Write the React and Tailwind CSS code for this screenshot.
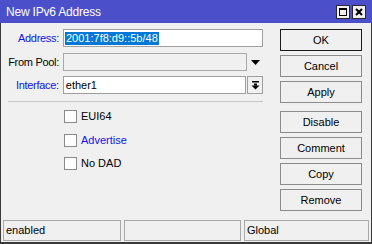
import React from 'react';

// Fenêtre "New IPv6 Address" façon Winbox
function SideButton({ label, primary = false, className = '' }) {
  return (
    <div
      className={`h-[22px] w-[82px] flex items-center justify-center bg-[#f0f0f0] border ${
        primary ? 'border-[#1c1c1c]' : 'border-[#8c8c8c]'
      } text-black ${className}`}
    >
      {label}
    </div>
  );
}

function Check({ label, blue = false, className = '' }) {
  return (
    <div className={`flex items-center h-[13px] ${className}`}>
      <div className="w-[13px] h-[13px] border border-[#8a8a8a] bg-white ml-[63px]" />
      <span className={`ml-[4px] ${blue ? 'text-[#1010f0]' : 'text-black'}`}>{label}</span>
    </div>
  );
}

export default function App() {
  return (
    <div className="w-[372px] h-[244px] flex flex-col bg-[#f0f0f0] text-[11px] leading-none font-['Liberation_Sans',Arial,sans-serif] select-none">
      {/* Barre de titre */}
      <div className="h-[23px] shrink-0 bg-[#4b4fc9] flex items-center pl-[6px] pr-[6px]">
        <span className="flex-1 text-white text-[12px] tracking-[-0.2px]">New IPv6 Address</span>
        <div className="w-[14px] h-[14px] bg-[#f0f0f0] border border-[#2a2a2a] flex items-center justify-center">
          <div className="w-[8px] h-[8px] border border-black border-t-2" />
        </div>
        <div className="ml-[2px] w-[14px] h-[14px] bg-[#f0f0f0] border border-[#2a2a2a] flex items-center justify-center">
          <svg width="8" height="8" viewBox="0 0 8 8">
            <path d="M1 1 L7 7 M7 1 L1 7" stroke="black" strokeWidth="2" />
          </svg>
        </div>
      </div>

      {/* Corps */}
      <div className="flex-1 flex border-x border-[#3a3a3a]">
        <div className="w-[262px] flex flex-col pt-[6px]">
          <div className="flex items-center h-[18px]">
            <span className="w-[58px] text-right text-[#1010f0] tracking-[-0.3px]">Address:</span>
            <div className="ml-[4px] w-[200px] h-[18px] bg-white border border-[#a0a0a0] flex items-center pl-[1px]">
              <span className="bg-[#0078d7] text-white px-[1px] leading-[13px]">2001:7f8:d9::5b/48</span>
            </div>
          </div>
          <div className="flex items-center h-[18px] mt-[6px]">
            <span className="w-[58px] text-right text-black tracking-[-0.3px]">From Pool:</span>
            <div className="ml-[4px] w-[184px] h-[18px] bg-[#f0f0f0] border border-[#a8a8a8]" />
            <div className="w-[16px] flex justify-center">
              <svg width="9" height="5" viewBox="0 0 9 5">
                <polygon points="0,0 9,0 4.5,5" fill="black" />
              </svg>
            </div>
          </div>
          <div className="flex items-center h-[18px] mt-[5px]">
            <span className="w-[58px] text-right text-[#1010f0] tracking-[-0.3px]">Interface:</span>
            <div className="ml-[4px] w-[184px] h-[18px] bg-white border border-[#a0a0a0] flex items-center pl-[2px]">
              ether1
            </div>
            <div className="ml-[1px] w-[16px] h-[18px] bg-[#f0f0f0] border border-[#a0a0a0] flex items-center justify-center">
              <svg width="9" height="9" viewBox="0 0 9 9">
                <rect x="1" y="0" width="7" height="1.5" fill="black" />
                <rect x="3" y="2.5" width="3" height="2" fill="black" />
                <polygon points="0.5,4.5 8.5,4.5 4.5,8.5" fill="black" />
              </svg>
            </div>
          </div>
          <div className="ml-[7px] w-[255px] h-px bg-[#c8c8c8] mt-[7px]" />
          <Check label="EUI64" className="mt-[8px]" />
          <Check label="Advertise" blue className="mt-[11px]" />
          <Check label="No DAD" className="mt-[10px]" />
        </div>

        <div className="ml-[17px] flex flex-col pt-[6px]">
          <SideButton label="OK" primary />
          <SideButton label="Cancel" className="mt-[4px]" />
          <SideButton label="Apply" className="mt-[4px]" />
          <SideButton label="Disable" className="mt-[8px]" />
          <SideButton label="Comment" className="mt-[4px]" />
          <SideButton label="Copy" className="mt-[4px]" />
          <SideButton label="Remove" className="mt-[4px]" />
        </div>
      </div>

      {/* Barre d'état */}
      <div className="h-[24px] shrink-0 flex items-start gap-[3px] px-[2px] border-x border-b-2 border-[#3a3a3a]">
        <div className="w-[118px] h-[21px] border border-[#a8a8a8] flex items-center pl-[2px] text-black">enabled</div>
        <div className="w-[117px] h-[21px] border border-[#a8a8a8]" />
        <div className="flex-1 h-[21px] border border-[#a8a8a8] flex items-center pl-[2px] text-black">Global</div>
      </div>
    </div>
  );
}
